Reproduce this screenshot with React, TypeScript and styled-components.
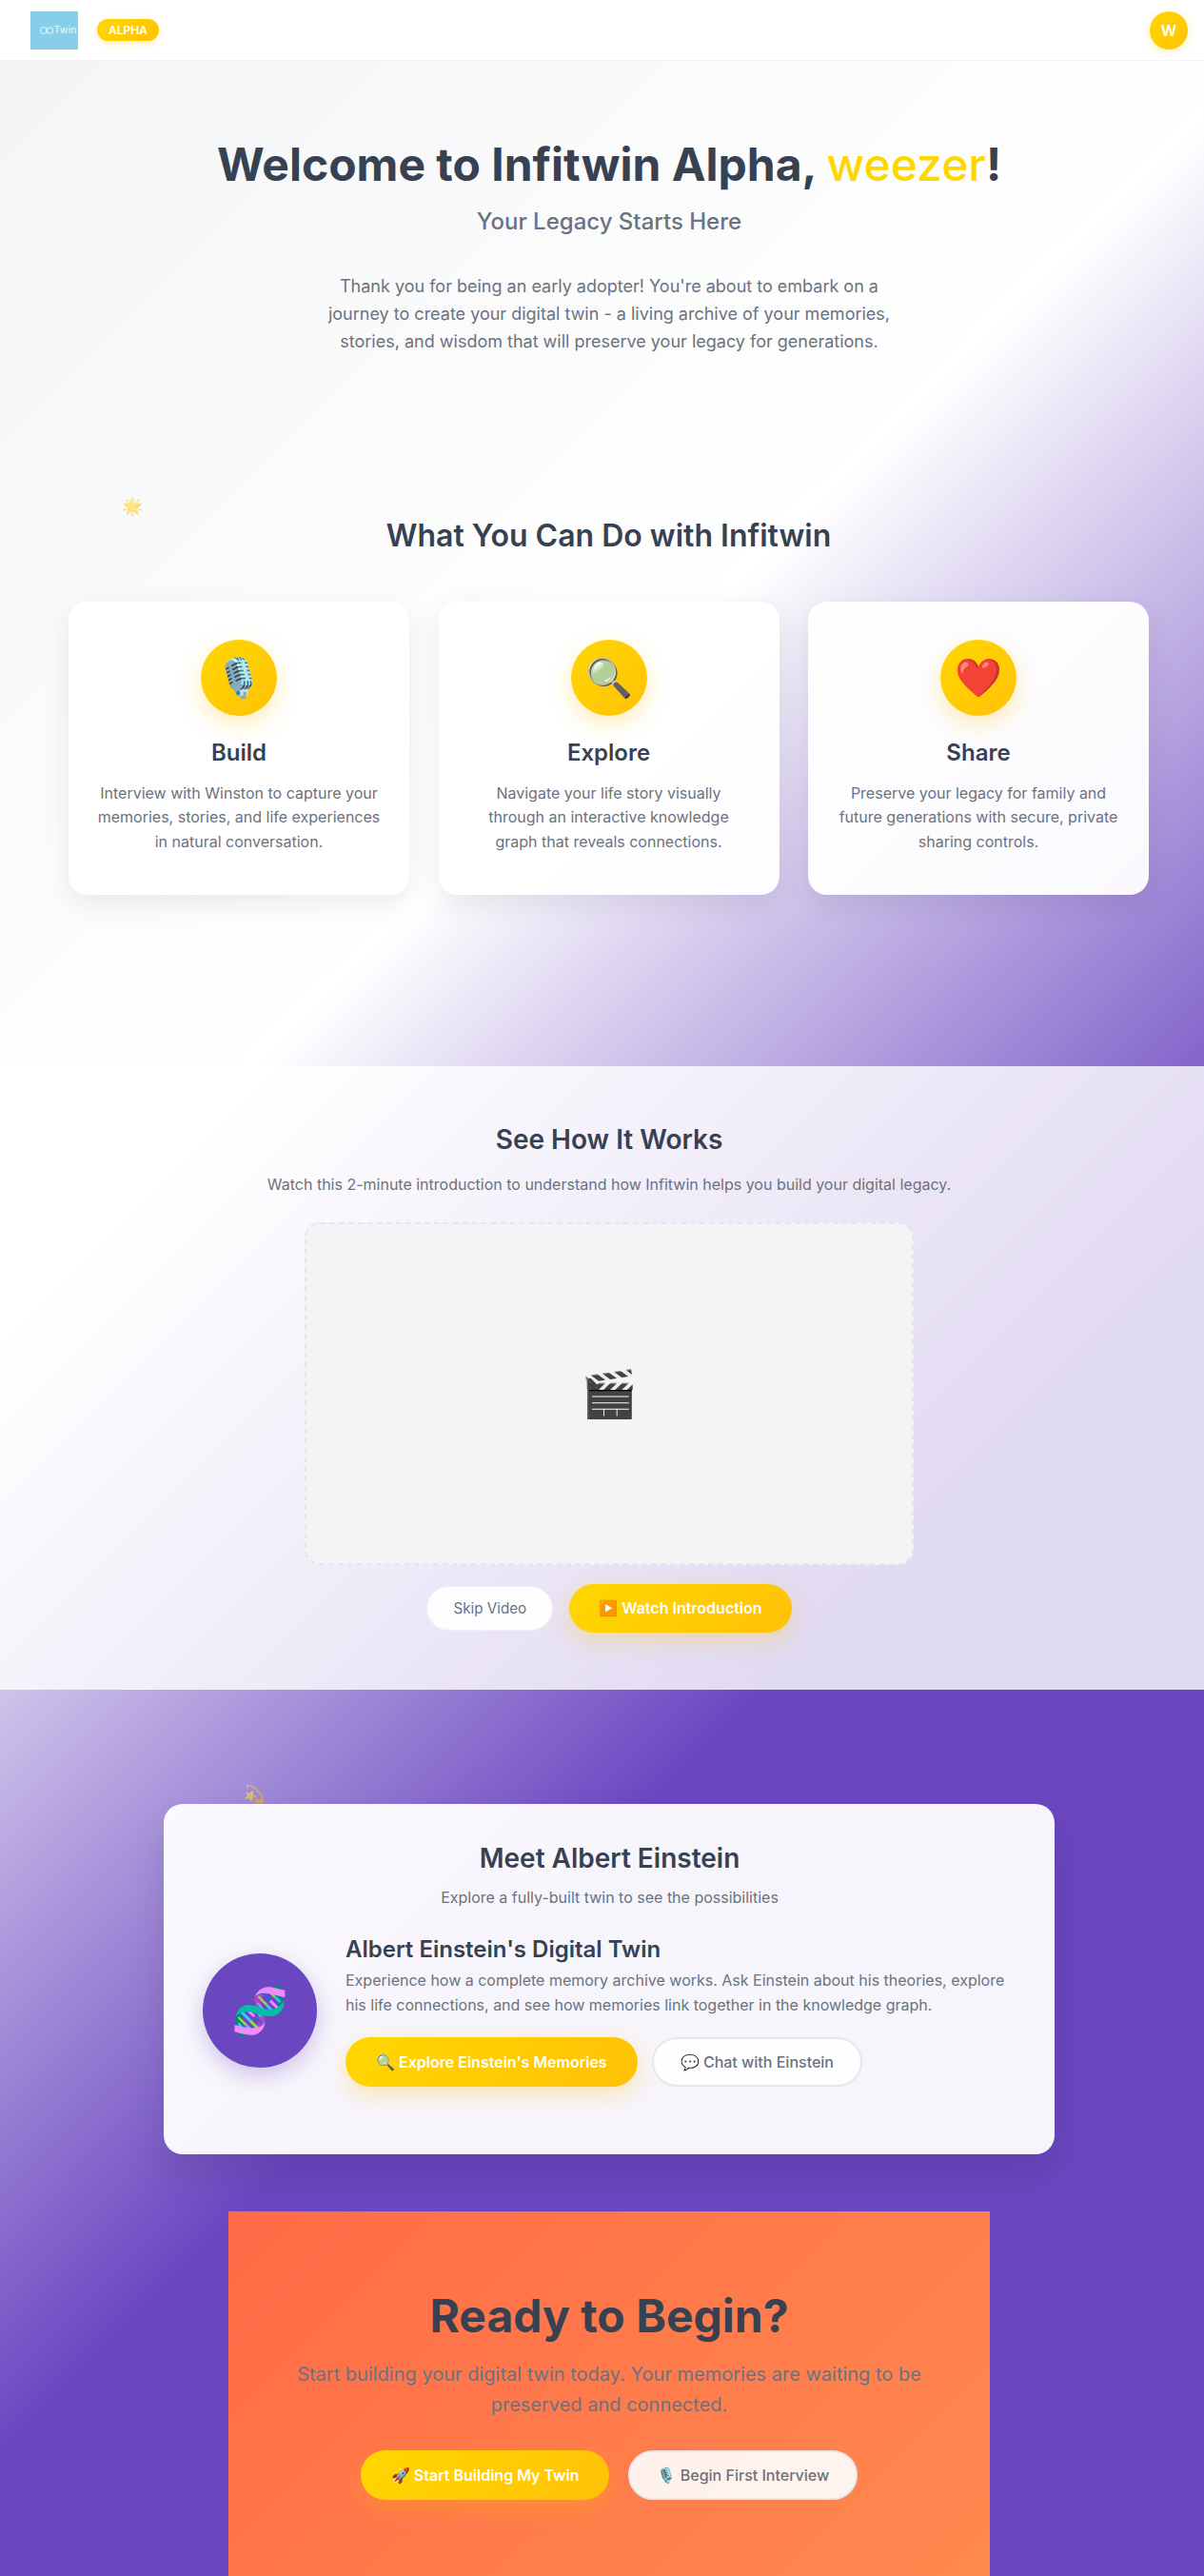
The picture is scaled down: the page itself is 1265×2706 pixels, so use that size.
import styled, { createGlobalStyle } from "styled-components";

const GlobalStyle = createGlobalStyle`
  * {
    box-sizing: border-box;
  }
  html, body {
    margin: 0;
    padding: 0;
  }
  body {
    font-family: Inter, "Noto Sans", sans-serif;
    color: #374151;
  }
`;

const Page = styled.div`
  height: 2706px;
  overflow: hidden;
  background: linear-gradient(135deg, #f3f4f6 0%, #ffffff 35%, #6b46c1 65%, #6b46c1 100%);
`;

const Content = styled.div`
  position: relative;
  width: 1280px;
`;

const Header = styled.header`
  height: 64px;
  padding: 0 32px;
  display: flex;
  align-items: center;
  justify-content: space-between;
  background: #ffffff;
  border-bottom: 1px solid #f3f4f6;
`;

const Brand = styled.div`
  display: flex;
  align-items: center;
  gap: 20px;
`;

const Logo = styled.div`
  width: 50px;
  height: 40px;
  padding-left: 9.5px;
  display: flex;
  align-items: center;
  background: #87ceeb;
  color: rgba(255, 255, 255, 0.75);
  font-size: 10.5px;
  font-weight: 500;
`;

const AlphaBadge = styled.span`
  width: 65px;
  height: 23px;
  display: flex;
  align-items: center;
  justify-content: center;
  border-radius: 12px;
  background: linear-gradient(135deg, #ffd700, #ffc107);
  box-shadow: 0 2px 8px rgba(255, 193, 7, 0.3);
  color: #ffffff;
  font-size: 12px;
  font-weight: 600;
`;

const Avatar = styled.div`
  width: 40px;
  height: 40px;
  display: flex;
  align-items: center;
  justify-content: center;
  border-radius: 50%;
  background: linear-gradient(135deg, #ffd700, #ffc107);
  box-shadow: 0 2px 8px rgba(255, 193, 7, 0.3);
  color: #ffffff;
  font-size: 16px;
  font-weight: 600;
`;

const Hero = styled.section`
  padding: 80px 32px 0;
  text-align: center;
`;

const Title = styled.h1`
  margin: 0 0 16px;
  font-size: 48px;
  line-height: 58px;
  font-weight: 700;
  color: #374151;
`;

const UserName = styled.span`
  color: #ffd700;
  font-weight: 500;
`;

const Subtitle = styled.p`
  margin: 0 0 40px;
  font-size: 24px;
  line-height: 29px;
  font-weight: 500;
  color: #6b7280;
`;

const Intro = styled.p`
  width: 600px;
  margin: 0 auto;
  font-size: 18px;
  line-height: 28.8px;
  color: #6b7280;
`;

const Sparkle = styled.span<{ $left: number; $top: number; $size: number }>`
  position: absolute;
  left: ${(p) => p.$left}px;
  top: ${(p) => p.$top}px;
  font-size: ${(p) => p.$size}px;
  line-height: 1;
  opacity: 0.6;
`;

const Features = styled.section`
  height: 746.6px;
  padding: 170px 73px 0 72px;
`;

const SectionTitle = styled.h2`
  margin: 0 0 49.5px;
  text-align: center;
  font-size: 32px;
  line-height: 39px;
  font-weight: 600;
  color: #374151;
`;

const FeatureGrid = styled.div`
  display: grid;
  grid-template-columns: repeat(3, 1fr);
  gap: 30.5px;
`;

const FeatureCard = styled.div`
  height: 308px;
  padding: 40px 30px;
  border-radius: 20px;
  background: rgba(255, 255, 255, 0.95);
  box-shadow: 0 10px 30px rgba(0, 0, 0, 0.08);
  text-align: center;
`;

const FeatureIcon = styled.div`
  width: 80px;
  height: 80px;
  margin: 0 auto 24px;
  display: flex;
  align-items: center;
  justify-content: center;
  border-radius: 50%;
  background: linear-gradient(135deg, #ffd700, #ffc107);
  box-shadow: 0 8px 25px rgba(255, 193, 7, 0.3);
  font-size: 40px;
`;

const FeatureName = styled.h3`
  margin: 0 0 16px;
  font-size: 24px;
  line-height: 29px;
  font-weight: 600;
  color: #374151;
`;

const FeatureText = styled.p`
  margin: 0;
  font-size: 16px;
  line-height: 25.6px;
  color: #6b7280;
`;

const VideoSection = styled.section`
  height: 655px;
  padding-top: 60px;
  background: rgba(255, 255, 255, 0.8);
  text-align: center;
`;

const VideoTitle = styled.h2`
  margin: 0 0 17px;
  font-size: 28px;
  line-height: 34px;
  font-weight: 600;
  color: #374151;
`;

const VideoText = styled.p`
  margin: 0 0 27px;
  font-size: 16px;
  line-height: 26px;
  color: #6b7280;
`;

const VideoBox = styled.div`
  width: 640px;
  height: 360px;
  margin: 0 auto 20px;
  display: flex;
  align-items: center;
  justify-content: center;
  border: 2px dashed #e5e7eb;
  border-radius: 16px;
  background: #f3f4f6;
  font-size: 48px;
`;

const ButtonRow = styled.div<{ $gap: number; $justify?: string }>`
  display: flex;
  align-items: center;
  justify-content: ${(p) => p.$justify ?? "center"};
  gap: ${(p) => p.$gap}px;
`;

const PrimaryButton = styled.button`
  height: 52px;
  padding: 0 32px;
  border: none;
  border-radius: 26px;
  background: linear-gradient(135deg, #ffd700, #ffc107);
  box-shadow: 0 8px 25px rgba(255, 193, 7, 0.3);
  color: #ffffff;
  font-family: inherit;
  font-size: 16px;
  font-weight: 600;
`;

const WatchButton = styled(PrimaryButton)`
  height: 51px;
  padding: 0 31px;
`;

const SecondaryButton = styled.button`
  height: 52px;
  padding: 0 28px;
  border: 2px solid #e5e7eb;
  border-radius: 26px;
  background: rgba(255, 255, 255, 0.9);
  color: #6b7280;
  font-family: inherit;
  font-size: 16px;
  font-weight: 500;
`;

const SkipButton = styled.button`
  height: 47px;
  padding: 0 27px;
  border: 1px solid #f0eef6;
  border-radius: 24px;
  background: rgba(255, 255, 255, 0.9);
  color: #6b7280;
  font-family: inherit;
  font-size: 15.2px;
  font-weight: 400;
`;

const LowerArea = styled.div`
  padding-top: 120px;
`;

const EinsteinCard = styled.section`
  width: 936px;
  height: 368px;
  margin: 0 auto 60px;
  padding: 40px 40px 40px 41px;
  border-radius: 20px;
  background: rgba(255, 255, 255, 0.95);
  box-shadow: 0 20px 40px rgba(0, 0, 0, 0.1);
`;

const EinsteinHeading = styled.div`
  text-align: center;
  margin-bottom: 27px;
`;

const EinsteinTitle = styled.h2`
  margin: 0 0 11px;
  font-size: 28px;
  line-height: 34px;
  font-weight: 600;
  color: #374151;
`;

const EinsteinSub = styled.p`
  margin: 0;
  font-size: 16px;
  line-height: 26px;
  color: #6b7280;
`;

const TwinRow = styled.div`
  display: flex;
  align-items: center;
  gap: 30px;
`;

const TwinAvatar = styled.div`
  flex: 0 0 120px;
  height: 120px;
  margin-bottom: 2px;
  display: flex;
  align-items: center;
  justify-content: center;
  border-radius: 50%;
  background: #6b46c1;
  box-shadow: 0 8px 25px rgba(107, 70, 193, 0.3);
  font-size: 48px;
`;

const TwinInfo = styled.div`
  flex: 1;
`;

const TwinName = styled.h3`
  margin: 0 0 6px;
  font-size: 24px;
  line-height: 29px;
  font-weight: 600;
  color: #374151;
`;

const TwinText = styled.p`
  margin: 0 0 21px;
  font-size: 16px;
  line-height: 25.6px;
  color: #6b7280;
`;

const Cta = styled.section`
  width: 800px;
  height: 500px;
  margin: 0 auto;
  padding-top: 81px;
  background: linear-gradient(135deg, #ff6b47, #ff8c50);
  text-align: center;
`;

const CtaTitle = styled.h2`
  margin: 0 0 16px;
  font-size: 48px;
  line-height: 58px;
  font-weight: 700;
  color: #374151;
`;

const CtaText = styled.p`
  width: 700px;
  margin: 0 auto 32px;
  font-size: 20px;
  line-height: 32px;
  color: #6b7280;
`;

const features = [
  {
    icon: "🎙️",
    name: "Build",
    text: "Interview with Winston to capture your memories, stories, and life experiences in natural conversation.",
  },
  {
    icon: "🔍",
    name: "Explore",
    text: "Navigate your life story visually through an interactive knowledge graph that reveals connections.",
  },
  {
    icon: "❤️",
    name: "Share",
    text: "Preserve your legacy for family and future generations with secure, private sharing controls.",
  },
];

export default function App() {
  return (
    <Page>
      <GlobalStyle />
      <Content>
        <Header>
          <Brand>
            <Logo>
              <svg width="15" height="8" viewBox="0 0 15 8" fill="none" stroke="currentColor" strokeWidth="1.1">
                <circle cx="4" cy="4" r="3.2" />
                <circle cx="10.5" cy="4" r="3.2" />
              </svg>
              <span>Twin</span>
            </Logo>
            <AlphaBadge>ALPHA</AlphaBadge>
          </Brand>
          <Avatar>W</Avatar>
        </Header>

        <Hero>
          <Title>
            Welcome to Infitwin Alpha, <UserName>weezer</UserName>!
          </Title>
          <Subtitle>Your Legacy Starts Here</Subtitle>
          <Intro>
            Thank you for being an early adopter! You're about to embark on a journey to create your digital twin - a
            living archive of your memories, stories, and wisdom that will preserve your legacy for generations.
          </Intro>
        </Hero>

        <Sparkle $left={128} $top={523} $size={18}>🌟</Sparkle>

        <Features>
          <SectionTitle>What You Can Do with Infitwin</SectionTitle>
          <FeatureGrid>
            {features.map((f) => (
              <FeatureCard key={f.name}>
                <FeatureIcon>{f.icon}</FeatureIcon>
                <FeatureName>{f.name}</FeatureName>
                <FeatureText>{f.text}</FeatureText>
              </FeatureCard>
            ))}
          </FeatureGrid>
        </Features>

        <VideoSection>
          <VideoTitle>See How It Works</VideoTitle>
          <VideoText>Watch this 2-minute introduction to understand how Infitwin helps you build your digital legacy.</VideoText>
          <VideoBox>🎬</VideoBox>
          <ButtonRow $gap={17}>
            <SkipButton>Skip Video</SkipButton>
            <WatchButton>▶️ Watch Introduction</WatchButton>
          </ButtonRow>
        </VideoSection>

        <Sparkle $left={256} $top={1876} $size={18}>💫</Sparkle>

        <LowerArea>
          <EinsteinCard>
            <EinsteinHeading>
              <EinsteinTitle>Meet Albert Einstein</EinsteinTitle>
              <EinsteinSub>Explore a fully-built twin to see the possibilities</EinsteinSub>
            </EinsteinHeading>
            <TwinRow>
              <TwinAvatar>🧬</TwinAvatar>
              <TwinInfo>
                <TwinName>Albert Einstein's Digital Twin</TwinName>
                <TwinText>
                  Experience how a complete memory archive works. Ask Einstein about his theories, explore his life
                  connections, and see how memories link together in the knowledge graph.
                </TwinText>
                <ButtonRow $gap={15} $justify="flex-start">
                  <PrimaryButton>🔍 Explore Einstein's Memories</PrimaryButton>
                  <SecondaryButton>💬 Chat with Einstein</SecondaryButton>
                </ButtonRow>
              </TwinInfo>
            </TwinRow>
          </EinsteinCard>

          <Cta>
            <CtaTitle>Ready to Begin?</CtaTitle>
            <CtaText>Start building your digital twin today. Your memories are waiting to be preserved and connected.</CtaText>
            <ButtonRow $gap={20}>
              <PrimaryButton>🚀 Start Building My Twin</PrimaryButton>
              <SecondaryButton>🎙️ Begin First Interview</SecondaryButton>
            </ButtonRow>
          </Cta>
        </LowerArea>
      </Content>
    </Page>
  );
}
